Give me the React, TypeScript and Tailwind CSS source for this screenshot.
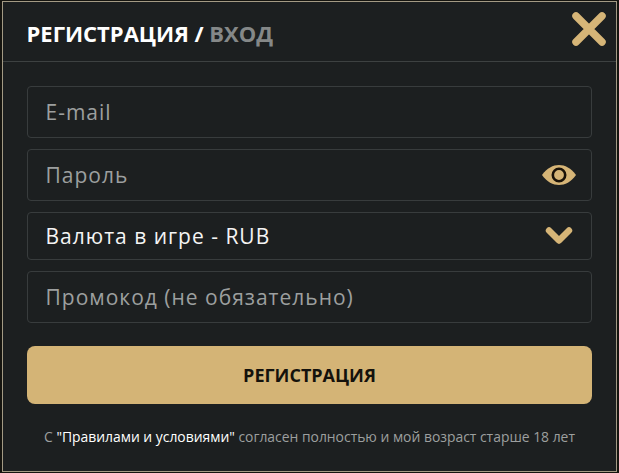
import React from 'react';

const EyeIcon = () => (
  <svg width="36" height="22" viewBox="0 0 36 22" className="block">
    <path d="M1 11C6 4 12 1 18 1s12 3 17 10c-5 7-11 10-17 10S6 18 1 11z" fill="#d6b577" />
    <circle cx="18" cy="11" r="6.2" fill="none" stroke="#1a1208" strokeWidth="2.6" />
  </svg>
);

const ChevronIcon = () => (
  <svg width="28" height="20" viewBox="0 0 28 20" className="block">
    <path d="M4 4.5L14 14.5L24 4.5" fill="none" stroke="#d6b577" strokeWidth="6.4" strokeLinecap="round" strokeLinejoin="round" />
  </svg>
);

const CloseIcon = () => (
  <svg width="36" height="36" viewBox="0 0 36 36" className="block">
    <path d="M5 5L31 31M31 5L5 31" fill="none" stroke="#d6b577" strokeWidth="7.5" strokeLinecap="round" />
  </svg>
);

const Field = ({ label, className = '', light = false, children }: { label: string; className?: string; light?: boolean; children?: React.ReactNode }) => (
  <div className={`flex items-center justify-between rounded-[4px] border border-[#383c3d] pl-[17.5px] pr-[14px] text-[21px] tracking-[1px] ${light ? 'text-[#f4f4f4]' : 'text-[#9c9f9f]'} ${className}`}>
    <span className="translate-y-[1px]">{label}</span>
    {children}
  </div>
);

export default function App() {
  return (
    <div className="h-[473px] w-[619px] overflow-hidden bg-[#15140f] p-[1px_2px_1px_2px] font-['Open_Sans',sans-serif]">
      <div className="flex h-[471px] flex-col border border-[#a39a84] bg-[#1c1f20]">
        {/* header */}
        <div className="relative flex h-[60px] shrink-0 items-center border-b border-[#3d4141] pl-[23.5px]">
          <h2 className="translate-y-[1px] text-[22px] font-bold leading-none text-white">
            РЕГИСТРАЦИЯ / <span className="text-[#858888]">ВХОД</span>
          </h2>
          <button className="absolute right-[9px] top-[9px]">
            <CloseIcon />
          </button>
        </div>

        {/* form */}
        <div className="flex flex-col px-[24px] pt-[24px]">
          <Field label="E-mail" className="h-[52px]" />
          <Field label="Пароль" className="mt-[11px] h-[52px]">
            <EyeIcon />
          </Field>
          <Field label="Валюта в игре - RUB" light className="mt-[11px] h-[48px]">
            <span className="mr-[4px]"><ChevronIcon /></span>
          </Field>
          <Field label="Промокод (не обязательно)" className="mt-[11px] h-[52px]" />
          <button className="mt-[23px] flex h-[58px] items-center justify-center rounded-[8px] bg-[#d4b476] text-[18px] font-bold text-[#14120c]">
            РЕГИСТРАЦИЯ
          </button>
          <p className="mt-[23px] whitespace-nowrap text-center text-[13.9px] text-[#9c9f9f]">
            С <span className="font-medium text-white">"Правилами и условиями"</span> согласен полностью и мой возраст старше 18 лет
          </p>
        </div>
      </div>
    </div>
  );
}
